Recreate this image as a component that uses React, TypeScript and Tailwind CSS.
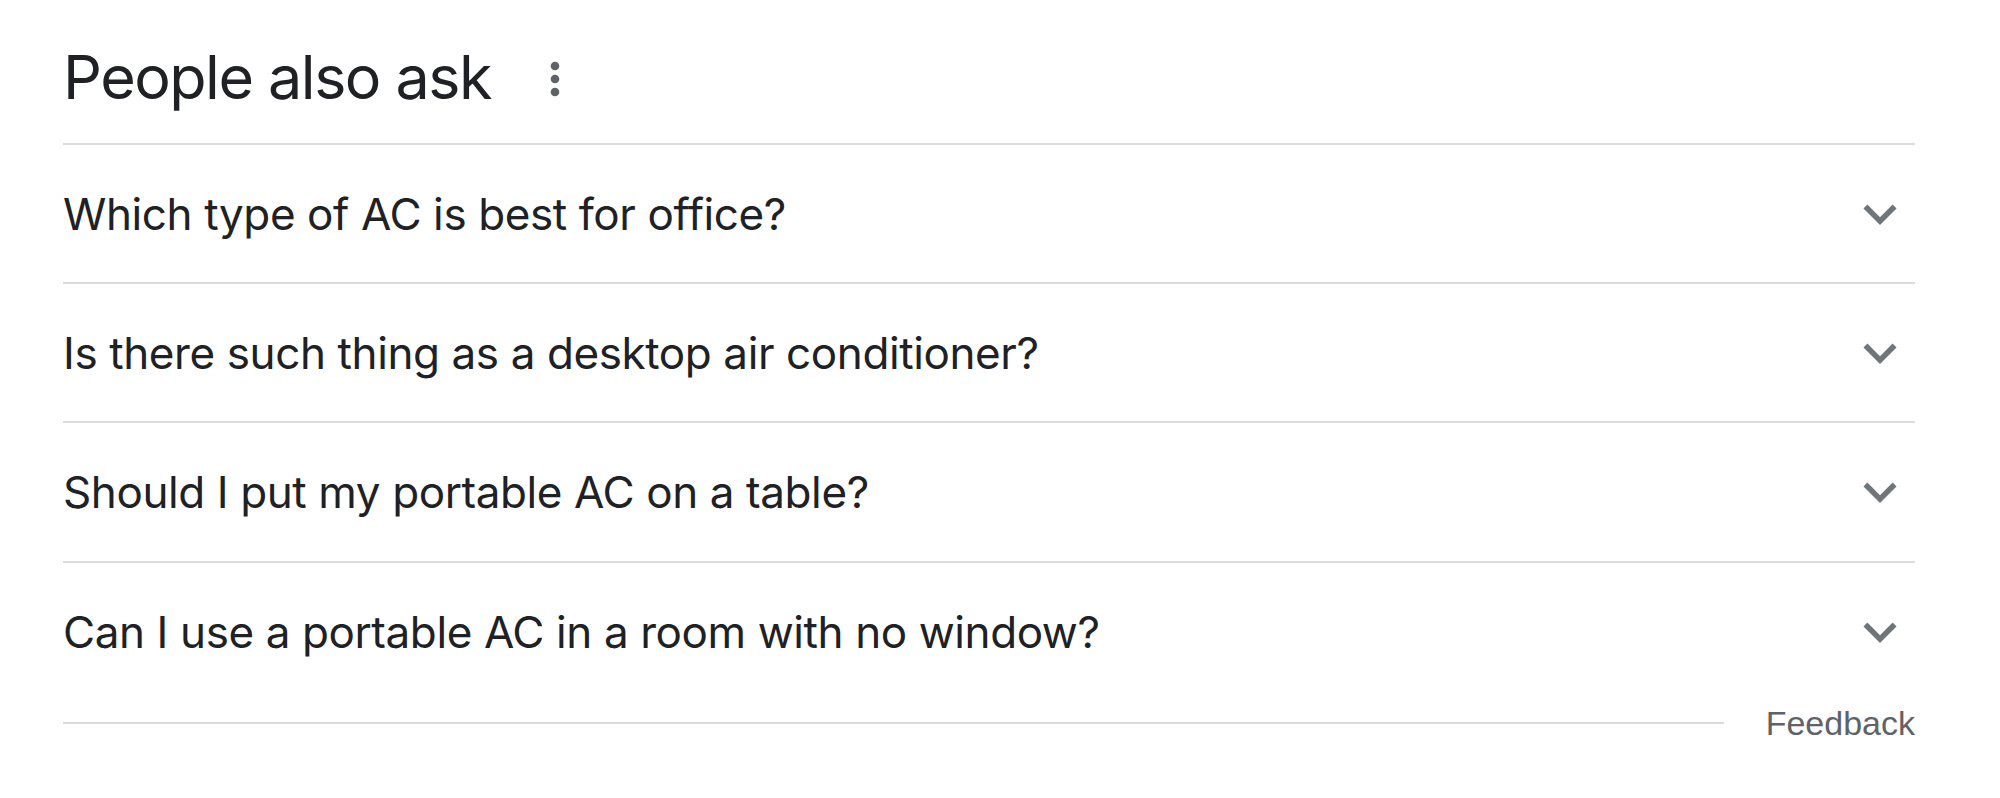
const questions = [
  "Which type of AC is best for office?",
  "Is there such thing as a desktop air conditioner?",
  "Should I put my portable AC on a table?",
  "Can I use a portable AC in a room with no window?",
];

function ExpandMore() {
  return (
    <svg width="66" height="66" viewBox="0 0 24 24" fill="#70757a">
      <path d="M16.59 8.59L12 13.17 7.41 8.59 6 10l6 6 6-6z" />
    </svg>
  );
}

function MoreVert() {
  return (
    <svg width="52" height="52" viewBox="0 0 24 24" fill="#5f6368">
      <path d="M12 8c1.1 0 2-.9 2-2s-.9-2-2-2-2 .9-2 2 .9 2 2 2zm0 2c-1.1 0-2 .9-2 2s.9 2 2 2 2-.9 2-2-.9-2-2-2zm0 6c-1.1 0-2 .9-2 2s.9 2 2 2 2-.9 2-2-.9-2-2-2z" />
    </svg>
  );
}

export default function App() {
  return (
    <div className="w-[2000px] h-[798px] bg-white font-['Inter',sans-serif] text-[#202124]">
      <div className="ml-[63px] w-[1852px]">
        {/* header */}
        <div className="h-[143px] pt-[11px] flex items-center">
          <h2 className="text-[61px] leading-none font-normal tracking-[-1.5px]">People also ask</h2>
          <button className="ml-[38px] mt-[3px] flex items-center justify-center">
            <MoreVert />
          </button>
        </div>

        {/* questions */}
        {questions.map((q, i) => (
          <div
            key={q}
            className={`${i === 2 ? "h-[140px]" : "h-[139px]"} border-t-2 border-[#dadce0] flex items-center justify-between`}
          >
            <span className="text-[44px] leading-none tracking-[-0.4px]">{q}</span>
            <span className="mr-[2px]">
              <ExpandMore />
            </span>
          </div>
        ))}

        {/* footer */}
        <div className="flex items-center mt-[3px]">
          <div className="flex-1 border-t-2 border-[#dadce0]" />
          <span className="ml-[42px] text-[34px] leading-[40px] text-[#5f6368] font-['Liberation_Sans',Arial,sans-serif]">
            Feedback
          </span>
        </div>
      </div>
    </div>
  );
}
